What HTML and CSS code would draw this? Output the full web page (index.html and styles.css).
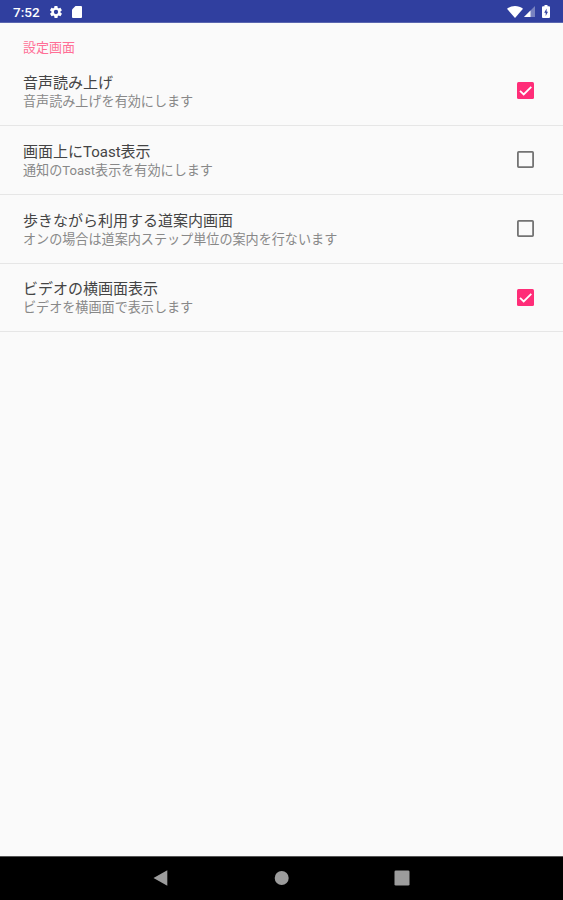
FILE: index.html
```html
<!DOCTYPE html>
<html lang="ja">
<head>
<meta charset="utf-8">
<title>設定画面</title>
<link rel="stylesheet" href="styles.css">
</head>
<body>
<header class="status">
  <span class="time">7:52</span>
  <svg class="gear" viewBox="2 2 20 20"><path fill-rule="evenodd" d="M19.4 13c0-.3.1-.6.1-1s0-.7-.1-1l2.100-1.600c.2-.2.3-.4.100-.7l-2-3.400c-.1-.2-.4-.3-.6-.2l-2.500 1c-.5-.4-1.100-.7-1.700-1l-.4-2.600c0-.3-.2-.5-.5-.5h-4c-.3 0-.5.2-.5.500L9 5.100c-.6.300-1.200.600-1.700 1l-2.500-1c-.2-.1-.5 0-.6.200l-2 3.400c-.1.300 0 .500.100.700L4.500 11v2l-2.100 1.600c-.2.200-.3.400-.1.700l2 3.400c.1.200.4.300.600.200l2.500-1c.500.400 1.100.7 1.700 1l.4 2.600c0 .300.200.500.500.500h4c.300 0 .500-.200.500-.500l.4-2.600c.600-.300 1.200-.600 1.700-1l2.500 1c.200.100.500 0 .600-.200l2-3.400c.1-.300 0-.500-.1-.700zM12 15.600a3.600 3.600 0 1 1 0-7.200 3.600 3.600 0 0 1 0 7.200z"/></svg>
  <svg class="card" viewBox="0 0 10 12"><path d="M3.500 0H9a1 1 0 0 1 1 1v10a1 1 0 0 1-1 1H1a1 1 0 0 1-1-1V3.500z"/></svg>
  <span class="space"></span>
  <svg class="wifi" viewBox="0 0 16 12"><path d="M0 2.800C4.500-.9 11.500-.9 16 2.800L8 12z"/></svg>
  <svg class="signal" viewBox="0 0 11 11"><path class="dim" d="M0 11L11 0v11z"/><path d="M0 11l6.500-6.500V11z"/></svg>
  <svg class="battery" viewBox="0 0 8 13"><path fill-rule="evenodd" d="M2.500 0h3v1.200H7a1 1 0 0 1 1 1V12a1 1 0 0 1-1 1H1a1 1 0 0 1-1-1V2.200a1 1 0 0 1 1-1h1.500zM4.600 3.500L2.200 7.800h1.500V11l2.300-4.300H4.600z"/></svg>
</header>
<main>
  <h1>設定画面</h1>
  <label class="row">
    <span class="text"><b>音声読み上げ</b><small>音声読み上げを有効にします</small></span>
    <svg class="box on" viewBox="0 0 17 17"><rect width="17" height="17" rx="1.500"/><path d="M3 8.800l3.700 3.700 7.600-7.700"/></svg>
  </label>
  <label class="row">
    <span class="text"><b>画面上にToast表示</b><small>通知のToast表示を有効にします</small></span>
    <svg class="box" viewBox="0 0 17 17"><rect x=".9" y=".9" width="15.200" height="15.200" rx=".8"/></svg>
  </label>
  <label class="row">
    <span class="text"><b>歩きながら利用する道案内画面</b><small>オンの場合は道案内ステップ単位の案内を行ないます</small></span>
    <svg class="box" viewBox="0 0 17 17"><rect x=".9" y=".9" width="15.200" height="15.200" rx=".8"/></svg>
  </label>
  <label class="row last">
    <span class="text"><b>ビデオの横画面表示</b><small>ビデオを横画面で表示します</small></span>
    <svg class="box on" viewBox="0 0 17 17"><rect width="17" height="17" rx="1.500"/><path d="M3 8.800l3.700 3.700 7.600-7.700"/></svg>
  </label>
</main>
<nav>
  <svg viewBox="0 0 16 16"><path d="M.5 8L14.300.300v15.400z"/></svg>
  <svg viewBox="0 0 16 16"><circle cx="7.700" cy="8" r="7"/></svg>
  <svg viewBox="0 0 16 16"><rect x=".5" y=".5" width="15" height="15" rx="1.300"/></svg>
</nav>
</body>
</html>
```
FILE: styles.css
```css
* { box-sizing: border-box; }
body {
  margin: 0;
  height: 900px;
  display: flex;
  flex-direction: column;
  background: #fafafa;
  font-family: Roboto, "Noto Sans CJK JP", sans-serif;
  overflow: hidden;
}
svg { display: block; flex: none; }
.status {
  height: 23px;
  display: flex;
  align-items: center;
  padding: 1px 13px 0;
  background: #303f9f;
  border-bottom: 1px solid #5a66b0;
  color: #fff;
  fill: #fff;
}
.time { width: 37px; font-size: 13.5px; line-height: 20px; font-weight: 500; }
.gear { width: 12px; height: 12px; }
.card { width: 10px; height: 12px; margin-left: 10px; }
.space { flex: 1; }
.wifi { width: 16px; height: 12px; }
.signal { width: 11px; height: 11px; margin-left: 1px; }
.dim { opacity: .35; }
.battery { width: 8px; height: 13px; margin-left: 7px; }
main { flex: 1; }
h1 {
  margin: 0;
  padding: 15px 23px 0;
  height: 34px;
  font-size: 13px;
  line-height: 20px;
  font-weight: 400;
  color: #ff6f96;
}
.row {
  height: 68.9px;
  display: flex;
  align-items: center;
  justify-content: space-between;
  padding: 0 29px 0 23px;
  border-bottom: 1px solid #e6e6e6;
}
.last { height: 68.2px; }
.text { padding-top: 2px; }
.last .text { padding-top: 1px; }
.row b, .row small { display: block; font-weight: 400; white-space: nowrap; }
.row b { font-size: 15px; line-height: 20px; color: #444; }
.row small { font-size: 13.1px; line-height: 18px; color: #888; }
.box { width: 17px; height: 17px; fill: none; stroke: #737373; stroke-width: 1.8; }
.on rect { fill: #ff2d78; stroke: none; }
.on path { stroke: #fff; }
nav {
  height: 44px;
  display: flex;
  justify-content: center;
  align-items: center;
  gap: 104.500px;
  padding-bottom: 2px;
  background: #000;
  border-top: 1px solid #555;
  fill: #9c9c9c;
}
nav svg { width: 16px; height: 16px; }
```
